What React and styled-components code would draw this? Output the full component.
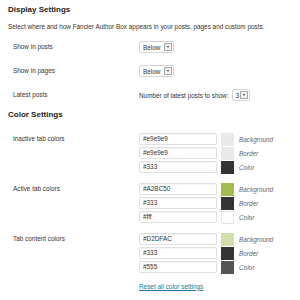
import React from 'react'
import styled, { createGlobalStyle } from 'styled-components'

const GlobalStyle = createGlobalStyle`
  html, body {
    margin: 0;
    padding: 0;
    background: #ffffff;
  }
  body {
    font-family: 'Liberation Sans', Arial, sans-serif;
    color: #333;
  }
`

const Page = styled.div`
  width: 300px;
  height: 300px;
  box-sizing: border-box;
  padding: 4px 8px 0 8px;
  overflow: hidden;
`

const SectionTitle = styled.h3`
  margin: ${({ top }) => top || 0}px 0 0 0;
  font-size: 8px;
  line-height: 12px;
  font-weight: bold;
  color: #222;
`

const Description = styled.p`
  margin: 5px 0 0 0;
  font-size: 6.4px;
  line-height: 12px;
  color: #333;
  white-space: nowrap;
`

const FormTable = styled.div`
  display: flex;
  flex-direction: column;
  margin-top: ${({ top }) => top || 0}px;
  gap: ${({ gap }) => gap || 0}px;
`

const Row = styled.div`
  display: grid;
  grid-template-columns: 131px 1fr;
  align-items: ${({ align }) => align || 'center'};
  height: ${({ height }) => height || 'auto'};
`

const Label = styled.div`
  padding-left: 5px;
  font-size: 6.4px;
  line-height: 12px;
  color: #333;
`

const Field = styled.div`
  display: flex;
  align-items: center;
  font-size: 6.4px;
  color: #333;
`

const Select = styled.div`
  box-sizing: border-box;
  display: flex;
  align-items: center;
  justify-content: space-between;
  width: ${({ width }) => width}px;
  height: 12px;
  margin-left: ${({ left }) => left || 0}px;
  padding: 0 1px 0 3px;
  border: 1px solid #d4d4d4;
  border-radius: 2px;
  background: #fff;
  font-size: 6.4px;
  color: #333;
`

const Arrow = styled.span`
  box-sizing: border-box;
  display: flex;
  align-items: center;
  justify-content: center;
  width: 8px;
  height: 8px;
  border: 1px solid #aaa;
  background: #f0f0f0;

  &::after {
    content: '';
    border-left: 1.5px solid transparent;
    border-right: 1.5px solid transparent;
    border-top: 2px solid #333;
  }
`

const ColorStack = styled.div`
  display: flex;
  flex-direction: column;
  gap: 1.5px;
`

const ColorLine = styled.div`
  display: flex;
  align-items: center;
`

const TextInput = styled.div`
  box-sizing: border-box;
  width: 78px;
  height: 12px;
  padding-left: 3px;
  border: 1px solid #dfdfdf;
  border-radius: 2px;
  box-shadow: inset 0 1px 1px rgba(0, 0, 0, 0.04);
  background: #fff;
  font-size: 6.4px;
  line-height: 10px;
  color: #333;
`

const Swatch = styled.div`
  box-sizing: border-box;
  width: 13px;
  height: 12.5px;
  margin-left: 4px;
  border: 1px solid ${({ color }) => (color === '#fff' ? '#e4e4e4' : color)};
  background: ${({ color }) => color};
`

const Hint = styled.span`
  margin-left: 5px;
  font-size: 6.4px;
  font-style: italic;
  color: #666;
`

const ResetLink = styled.a`
  display: block;
  margin: 8px 0 0 131px;
  font-size: 6.4px;
  line-height: 10px;
  color: #21759b;
  text-decoration: underline;
`

const colorGroups = [
  {
    label: 'Inactive tab colors',
    values: ['#e9e9e9', '#e9e9e9', '#333'],
  },
  {
    label: 'Active tab colors',
    values: ['#A2BC50', '#333', '#fff'],
  },
  {
    label: 'Tab content colors',
    values: ['#D2DFAC', '#333', '#555'],
  },
]

const parts = ['Background', 'Border', 'Color']

export default function App() {
  return (
    <>
      <GlobalStyle />
      <Page>
        <SectionTitle>Display Settings</SectionTitle>
        <Description>
          Select where and how Fancier Author Box appears in your posts, pages
          and custom posts.
        </Description>
        <FormTable top={2}>
          <Row height="24px">
            <Label>Show in posts</Label>
            <Field>
              <Select width={35}>
                Below
                <Arrow />
              </Select>
            </Field>
          </Row>
          <Row height="24px">
            <Label>Show in pages</Label>
            <Field>
              <Select width={35}>
                Below
                <Arrow />
              </Select>
            </Field>
          </Row>
          <Row height="24px">
            <Label>Latest posts</Label>
            <Field>
              Number of latest posts to show:
              <Select width={18} left={3}>
                3
                <Arrow />
              </Select>
            </Field>
          </Row>
        </FormTable>

        <SectionTitle top={2}>Color Settings</SectionTitle>
        <FormTable top={12} gap={9.5}>
          {colorGroups.map((group) => (
            <Row key={group.label} align="start">
              <Label>{group.label}</Label>
              <ColorStack>
                {group.values.map((value, i) => (
                  <ColorLine key={parts[i]}>
                    <TextInput>{value}</TextInput>
                    <Swatch color={value} />
                    <Hint>{parts[i]}</Hint>
                  </ColorLine>
                ))}
              </ColorStack>
            </Row>
          ))}
        </FormTable>
        <ResetLink href="#">Reset all color settings</ResetLink>
      </Page>
    </>
  )
}
